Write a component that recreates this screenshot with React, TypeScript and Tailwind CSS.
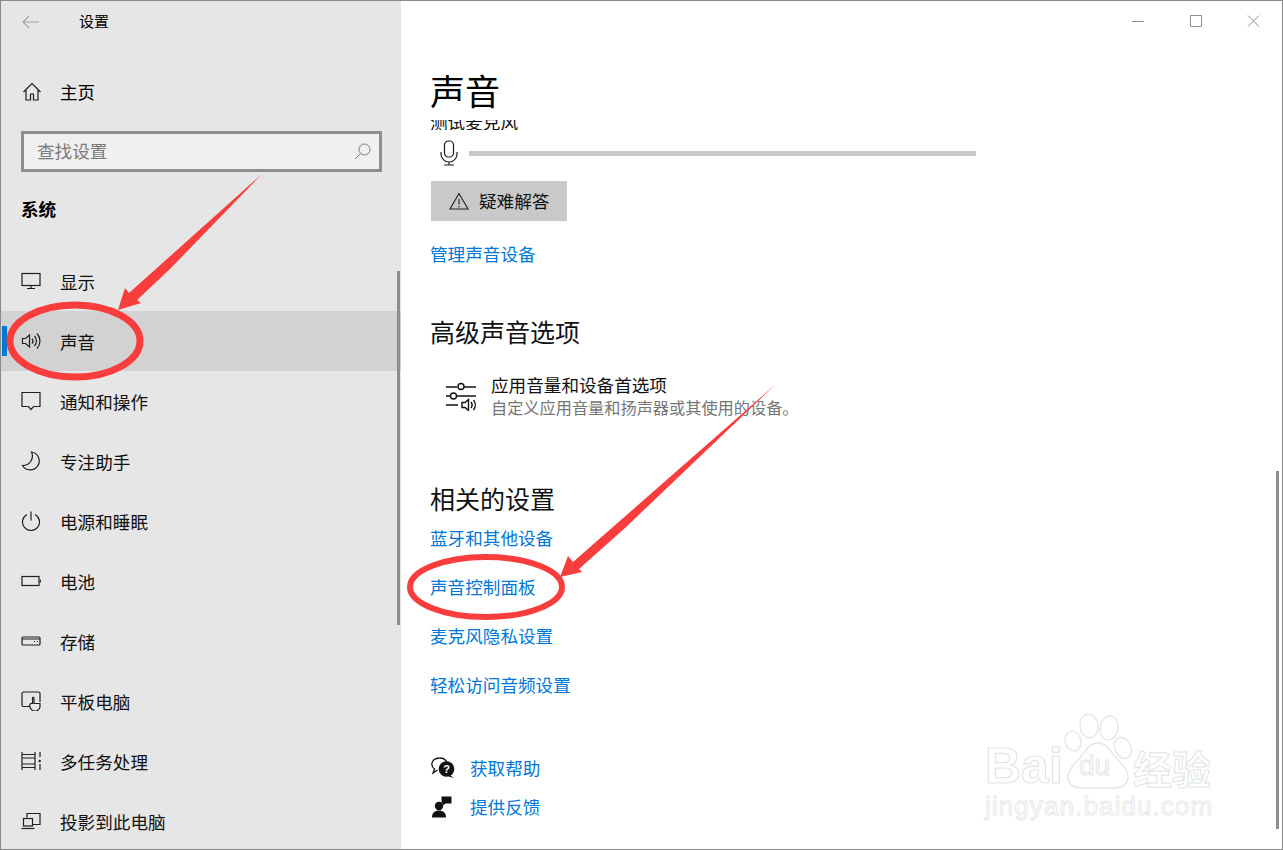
import React from "react";

const Icon = ({ children, size = 20 }: { children: React.ReactNode; size?: number }) => (
  <svg width={size} height={size} viewBox="0 0 20 20" fill="none" stroke="#1f1f1f" strokeWidth="1.2" className="shrink-0">
    {children}
  </svg>
);

const navItems: { label: string; icon: React.ReactNode; active?: boolean }[] = [
  {
    label: "显示",
    icon: (
      <>
        <rect x="1" y="2.5" width="18" height="12" />
        <path d="M10 14.5v3M6 17.5h8" />
      </>
    ),
  },
  {
    label: "声音",
    active: true,
    icon: (
      <>
        <path d="M1.5 7.5h3l4-3.5v12l-4-3.5h-3z" />
        <path d="M11 7.5a4 4 0 0 1 0 5M13.5 5a7.5 7.5 0 0 1 0 10M16 2.5a11 11 0 0 1 0 15" />
      </>
    ),
  },
  {
    label: "通知和操作",
    icon: <path d="M1 1.5h18v14h-6.5L10 18.5l-2.5-3H1z" />,
  },
  {
    label: "专注助手",
    icon: <path d="M10.5 1a9 9 0 1 1-9 13.5 9.5 9.5 0 0 0 9-13.5z" />,
  },
  {
    label: "电源和睡眠",
    icon: (
      <>
        <path d="M6 3.5a8.5 8.5 0 1 0 8 0" />
        <path d="M10 0.5v9" />
      </>
    ),
  },
  {
    label: "电池",
    icon: (
      <>
        <rect x="1" y="5.5" width="17" height="9" />
        <path d="M19.3 8.5v3" />
      </>
    ),
  },
  {
    label: "存储",
    icon: (
      <>
        <rect x="1" y="6" width="18" height="8" rx="1" />
        <path d="M1 8h18M13 10.5h1M16 10.5h1" />
      </>
    ),
  },
  {
    label: "平板电脑",
    icon: (
      <>
        <path d="M9 15.5H2.5A1.5 1.5 0 0 1 1 14V2.5A1.5 1.5 0 0 1 2.5 1h15A1.5 1.5 0 0 1 19 2.5V11" />
        <path d="M11.5 7v5.5l-2 0a4.5 4.5 0 0 0 .5 5.5 5 5 0 0 0 9-2v-3.5h-6V7a.75.75 0 0 0-1.5 0z" />
      </>
    ),
  },
  {
    label: "多任务处理",
    icon: (
      <>
        <path d="M1 1v18M1 3.5h13M1 16.5h13M14 1v18M1 7h13M1 13h13M19 1v5M19 13v6" />
        <circle cx="18.7" cy="10" r="1.2" fill="#1f1f1f" stroke="none" />
      </>
    ),
  },
  {
    label: "投影到此电脑",
    icon: (
      <>
        <path d="M6 6.5V2.5h13v11h-7" />
        <rect x="2.5" y="7.5" width="9" height="7.5" />
        <path d="M0.5 17.5h13" />
      </>
    ),
  },
];

const Sidebar = () => (
  <aside className="relative flex h-full w-[400px] shrink-0 flex-col overflow-hidden bg-[#e6e6e6]">
    <div className="flex h-[41px] shrink-0 items-center pl-[21px]">
      <svg width="18" height="14" viewBox="0 0 18 14" fill="none" stroke="#a3a3a3" strokeWidth="1.1">
        <path d="M17 7H1M7 1 1 7l6 6" />
      </svg>
      <span className="ml-[39px] text-[15px] text-black">设置</span>
    </div>
    <div className="mt-[30px] flex h-[40px] shrink-0 items-center pl-[21px]">
      <Icon>
        <path d="M1.5 10 10 1.5l8.5 8.5M4 8v10h4.5v-6h3v6H16V8" />
      </Icon>
      <span className="ml-[18px] text-[17.6px] text-black">主页</span>
    </div>
    <div className="mt-[19px] ml-[20px] flex h-[41px] w-[361px] shrink-0 items-center justify-between border-[3px] border-[#8e8e8e] bg-[#f0f0f0] pr-[8px] pl-[13px]">
      <span className="text-[17.6px] text-[#7a7a7a]">查找设置</span>
      <svg width="17" height="17" viewBox="0 0 17 17" fill="none" stroke="#7a7a7a" strokeWidth="1">
        <circle cx="10.5" cy="6.5" r="5.5" />
        <path d="M6.5 10.5 1 16" />
      </svg>
    </div>
    <div className="mt-[25px] h-[24px] shrink-0 pl-[20px] text-[17.6px] leading-[24px] font-bold text-black">系统</div>
    <nav className="mt-[30px] flex flex-col">
      {navItems.map((item) => (
        <div
          key={item.label}
          className={
            item.active
              ? "relative flex h-[60px] shrink-0 items-center bg-[#d2d2d2] pl-[20px]"
              : "relative flex h-[60px] shrink-0 items-center pl-[20px]"
          }
        >
          {item.active && <div className="absolute top-[15px] left-[1px] h-[30px] w-[5px] bg-[#0078d7]" />}
          <Icon>{item.icon}</Icon>
          <span className="mt-[2px] ml-[19px] text-[17.6px] text-[#111]">{item.label}</span>
        </div>
      ))}
    </nav>
    <div className="absolute top-[270px] right-[1px] h-[354px] w-[3px] bg-[#8e8e8e]" />
  </aside>
);

const links = ["蓝牙和其他设备", "声音控制面板", "麦克风隐私设置", "轻松访问音频设置"];

const Content = () => (
  <main className="relative flex h-full min-w-0 flex-1 flex-col bg-white pl-[29px]">
    <div className="flex h-[40px] shrink-0 items-center justify-end pr-[20px]">
      <svg width="130" height="14" viewBox="0 0 130 14" fill="none" stroke="#8f8f8f" strokeWidth="1">
        <path d="M0 7.5h12M58.5 1.5h11v11h-11zM116 1.5l11 11M127 1.5l-11 11" />
      </svg>
    </div>
    <h1 className="mt-[23px] h-[52px] shrink-0 text-[35px] leading-[52px] font-normal text-black">声音</h1>
    <div className="mt-[4px] h-[10px] shrink-0 overflow-hidden">
      <div className="-mt-[10px] text-[17.6px] leading-[24px] text-[#111]">测试麦克风</div>
    </div>
    <div className="mt-[10px] flex h-[26px] shrink-0 items-center">
      <div className="ml-[9px]">
        <svg width="20" height="26" viewBox="0 0 20 26" fill="none" stroke="#1f1f1f" strokeWidth="1.2">
          <rect x="5.5" y="1" width="9" height="16" rx="4" />
          <path d="M2 12v2a8 8 0 0 0 16 0v-2M10 22v3M5 25h10" />
        </svg>
      </div>
      <div className="ml-[10px] h-[5px] w-[507px] bg-[#c8c8c8]" />
    </div>
    <button className="mt-[15px] ml-[1px] flex h-[40px] w-[136px] shrink-0 items-center bg-[#c9c9c9] pl-[18px]">
      <svg width="20" height="18" viewBox="0 0 20 18" fill="none" stroke="#1f1f1f" strokeWidth="1.1">
        <path d="M10 1.5 1 17h18zM10 7v5.5M10 14v1.5" />
      </svg>
      <span className="ml-[10px] text-[17.6px] text-[#111]">疑难解答</span>
    </button>
    <a className="mt-[20px] h-[26px] shrink-0 text-[17.6px] leading-[26px] text-[#0078d7]">管理声音设备</a>
    <h2 className="mt-[46px] h-[36px] shrink-0 text-[25px] leading-[36px] font-normal text-[#111]">高级声音选项</h2>
    <div className="mt-[25px] flex shrink-0 items-center pl-[16px]">
      <svg width="30" height="30" viewBox="0 0 30 30" fill="none" stroke="#111" strokeWidth="1.4" className="shrink-0">
        <path d="M0 6h11M18 6h12M0 15h4M11 15h19M0 24h12" />
        <circle cx="15" cy="5.5" r="3" />
        <circle cx="7.5" cy="15" r="3" />
        <path d="M16 21.5h3l3.5-3v11l-3.5-3h-3zM25 21a5 5 0 0 1 0 6M27.5 19a8 8 0 0 1 0 10" />
      </svg>
      <div className="ml-[15px]">
        <div className="text-[17.6px] leading-[22px] text-[#111]">应用音量和设备首选项</div>
        <div className="text-[16.2px] leading-[22px] text-[#767676]">自定义应用音量和扬声器或其使用的设备。</div>
      </div>
    </div>
    <h2 className="mt-[62px] h-[36px] shrink-0 text-[25px] leading-[36px] font-normal text-[#111]">相关的设置</h2>
    <div className="mt-[9px] flex flex-col gap-[23px]">
      {links.map((link) => (
        <a key={link} className="h-[26px] text-[17.6px] leading-[26px] text-[#0078d7]">
          {link}
        </a>
      ))}
    </div>
    <div className="mt-[57px] ml-[1px] flex items-center">
      <svg width="24" height="22" viewBox="0 0 24 22" className="shrink-0">
        <path d="M8.5 1C4 1 .8 3.7.8 7.2c0 2 1 3.6 2.8 4.8L2 16l4.6-3" fill="none" stroke="#111" strokeWidth="1.3" />
        <path d="M8.5 1c3.7 0 6.5 1.8 7.4 4.3" fill="none" stroke="#111" strokeWidth="1.3" />
        <circle cx="15.5" cy="12" r="7.8" fill="#111" />
        <path d="m19 18 3.5 3-5-1.5z" fill="#111" />
        <text x="15.5" y="16" textAnchor="middle" fontSize="11" fontWeight="700" fill="#fff" fontFamily="Liberation Sans, sans-serif">?</text>
      </svg>
      <a className="ml-[15px] h-[26px] text-[17.6px] leading-[26px] text-[#0078d7]">获取帮助</a>
    </div>
    <div className="mt-[13px] ml-[1px] flex items-center">
      <svg width="24" height="22" viewBox="0 0 24 22" className="shrink-0">
        <circle cx="8" cy="10" r="4.2" fill="#111" />
        <path d="M1 21.5c0-5 3-7 7-7s7 2 7 7z" fill="#111" />
        <path d="M9 .5h10v7h-6l-2.5 2V7.5H9z" fill="#111" transform="translate(1.5 0)" />
      </svg>
      <a className="ml-[15px] h-[26px] text-[17.6px] leading-[26px] text-[#0078d7]">提供反馈</a>
    </div>
    <div className="absolute top-[470px] right-[3px] h-[358px] w-[3px] bg-[#8e8e8e]" />
  </main>
);

// 百度经验 watermark, lower right corner
const Watermark = () => (
  <div className="absolute top-[710px] left-[985px] h-[140px] w-[240px] text-white">
    <svg width="240" height="90" viewBox="0 0 240 90" fill="#fff" stroke="#e6e6e6" strokeWidth="1.4" className="absolute top-0 left-0">
      <ellipse cx="103" cy="15" rx="9" ry="12" transform="rotate(-8 103 15)" />
      <ellipse cx="123" cy="17" rx="9" ry="12" transform="rotate(10 123 17)" />
      <ellipse cx="87" cy="30" rx="8" ry="10" transform="rotate(-15 87 30)" />
      <ellipse cx="137" cy="37" rx="8" ry="11" transform="rotate(-25 137 37)" />
      <path d="M112 32c-10 0-13 10-20 17-6 6-10 11-10 17 0 7 6 11 14 11h32c8 0 14-4 14-11 0-6-4-11-10-17-7-7-10-17-20-17z" />
    </svg>
    <span className="absolute top-[30px] left-[-1px] text-[50px] leading-[50px] font-bold [-webkit-text-stroke:1.2px_#e4e4e4] [font-family:'Liberation_Sans',sans-serif]">Bai</span>
    <span className="absolute top-[40px] left-[93px] text-[28px] leading-[30px] [-webkit-text-stroke:1px_#e4e4e4] [font-family:'Liberation_Sans',sans-serif]">du</span>
    <span className="absolute top-[35px] left-[147px] text-[39px] leading-[42px] font-bold whitespace-nowrap [-webkit-text-stroke:1px_#e4e4e4]">经验</span>
    <span className="absolute top-[78px] left-[-1px] text-[26px] leading-[34px] tracking-[1.1px] whitespace-nowrap [-webkit-text-stroke:1px_#e8e8e8] [font-family:'Liberation_Sans',sans-serif]">jingyan.baidu.com</span>
  </div>
);

// red hand-drawn marks pasted over the screenshot
const Annotations = () => (
  <svg width="1283" height="850" viewBox="0 0 1283 850" fill="none" className="pointer-events-none absolute top-[-1px] left-[-1px]">
    <path d="M262 174 129 293 125 288 118 310 141 303 137 300 170 269z" fill="#f93c3c" />
    <ellipse cx="75" cy="341" rx="65" ry="36" stroke="#f93c3c" strokeWidth="7" />
    <path d="M776 384 573 562 568 556 560 577 582 572 579 569 625 528z" fill="#f93c3c" />
    <ellipse cx="486" cy="587" rx="76" ry="30" stroke="#f93c3c" strokeWidth="6" />
  </svg>
);

export default function App() {
  return (
    <div className="relative flex h-[850px] w-[1283px] overflow-hidden border border-[#8a8a8a] font-['Noto_Sans_CJK_SC','Noto_Sans',sans-serif]">
      <Sidebar />
      <Content />
      <Watermark />
      <Annotations />
    </div>
  );
}
